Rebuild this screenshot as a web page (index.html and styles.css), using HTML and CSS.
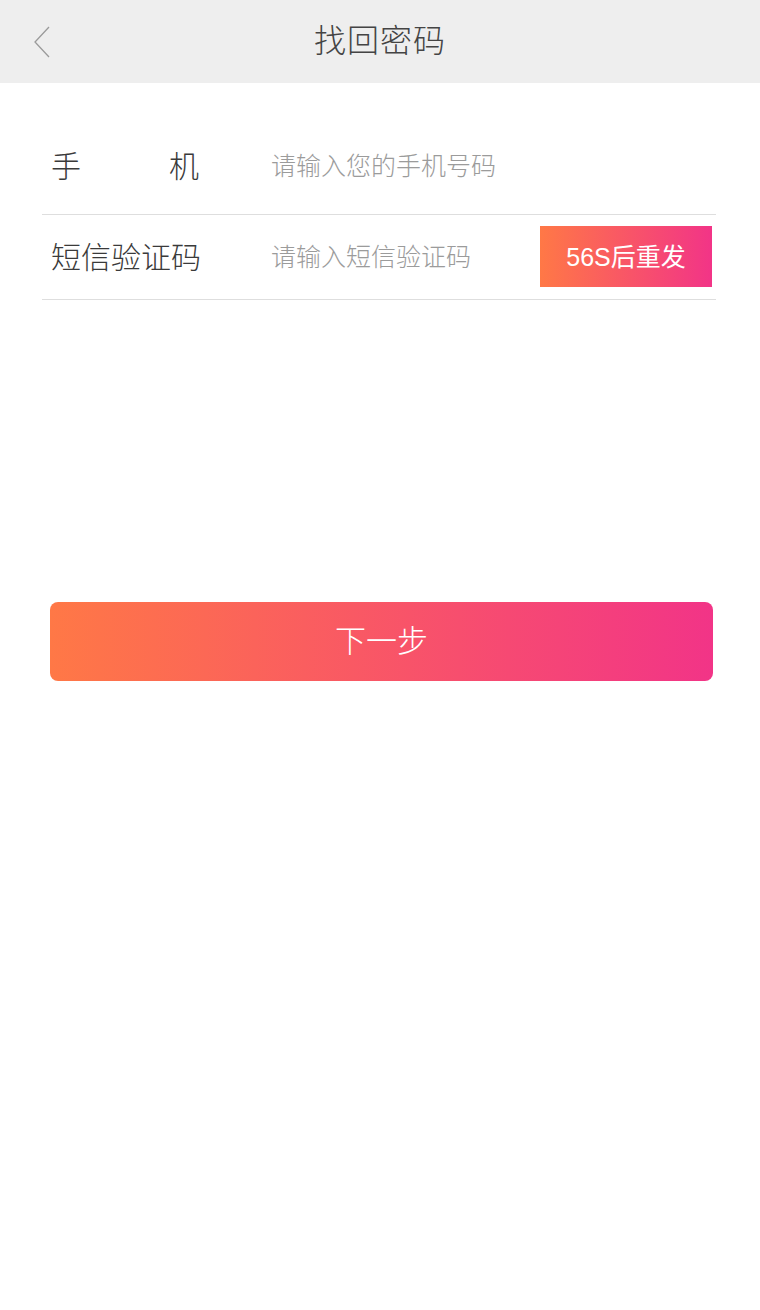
FILE: index.html
```html
<!DOCTYPE html>
<html lang="zh">
<head>
<meta charset="utf-8">
<title>找回密码</title>
<link rel="stylesheet" href="styles.css">
</head>
<body>
<header class="topbar">
  <a class="back" aria-label="返回">
    <svg width="18" height="32" viewBox="0 0 18 32"><path d="M16 1 L2 16 L16 31" fill="none" stroke="#9a9a9a" stroke-width="1.3"/></svg>
  </a>
  <h1 class="title">找回密码</h1>
</header>
<main class="content">
  <div class="row row-phone">
    <span class="label label-justify"><span>手</span><span>机</span></span>
    <span class="placeholder">请输入您的手机号码</span>
  </div>
  <div class="row row-code">
    <span class="label">短信验证码</span>
    <span class="placeholder">请输入短信验证码</span>
    <button class="resend">56S后重发</button>
  </div>
  <button class="next">下一步</button>
</main>
</body>
</html>
```
FILE: styles.css
```css
* { box-sizing: border-box; }
html, body { margin: 0; padding: 0; background: #fff; }
body {
  font-family: "Noto Sans CJK SC", "Noto Sans", sans-serif;
  font-weight: 300;
  color: #333;
}
.topbar {
  height: 83px;
  background: #eeeeee;
  display: flex;
  align-items: center;
  justify-content: center;
  position: relative;
  padding-bottom: 8px;
}
.back {
  position: absolute;
  left: 33px;
  top: 26px;
  display: flex;
}
.title {
  margin: 0;
  font-size: 32px;
  font-weight: 300;
  color: #444;
  letter-spacing: 1px;
}
.content {
  padding: 40px 44px 0 42px;
}
.row {
  display: flex;
  align-items: center;
  border-bottom: 1px solid #dedede;
  padding-left: 9px;
}
.row-phone { height: 92px; padding-bottom: 10px; }
.row-code { height: 85px; padding-right: 4px; }
.row-code .label, .row-code .placeholder { margin-bottom: 4px; }
.label {
  width: 220px;
  font-size: 30px;
  color: #3a3a3a;
  flex-shrink: 0;
}
.label-justify {
  display: flex;
  justify-content: space-between;
  width: 148px;
  margin-right: 72px;
}
.placeholder {
  font-size: 25px;
  color: #9b9b9b;
  flex: 1;
}
.resend {
  border: 0;
  width: 172px;
  height: 61px;
  margin-top: -2px;
  background: linear-gradient(90deg, #ff7846, #f23487);
  color: #fff;
  font-family: "Liberation Sans", "Noto Sans CJK SC", sans-serif;
  font-weight: 400;
  font-size: 25px;
  padding: 0 0 3px;
}
.next {
  display: block;
  margin: 302px 3px 0 8px;
  width: calc(100% - 11px);
  height: 79px;
  border: 0;
  border-radius: 8px;
  background: linear-gradient(90deg, #ff7846, #f23487);
  color: #fff;
  font-family: "Noto Sans CJK SC", "Noto Sans", sans-serif;
  font-weight: 300;
  font-size: 31px;
  padding: 0 0 6px;
}
```
